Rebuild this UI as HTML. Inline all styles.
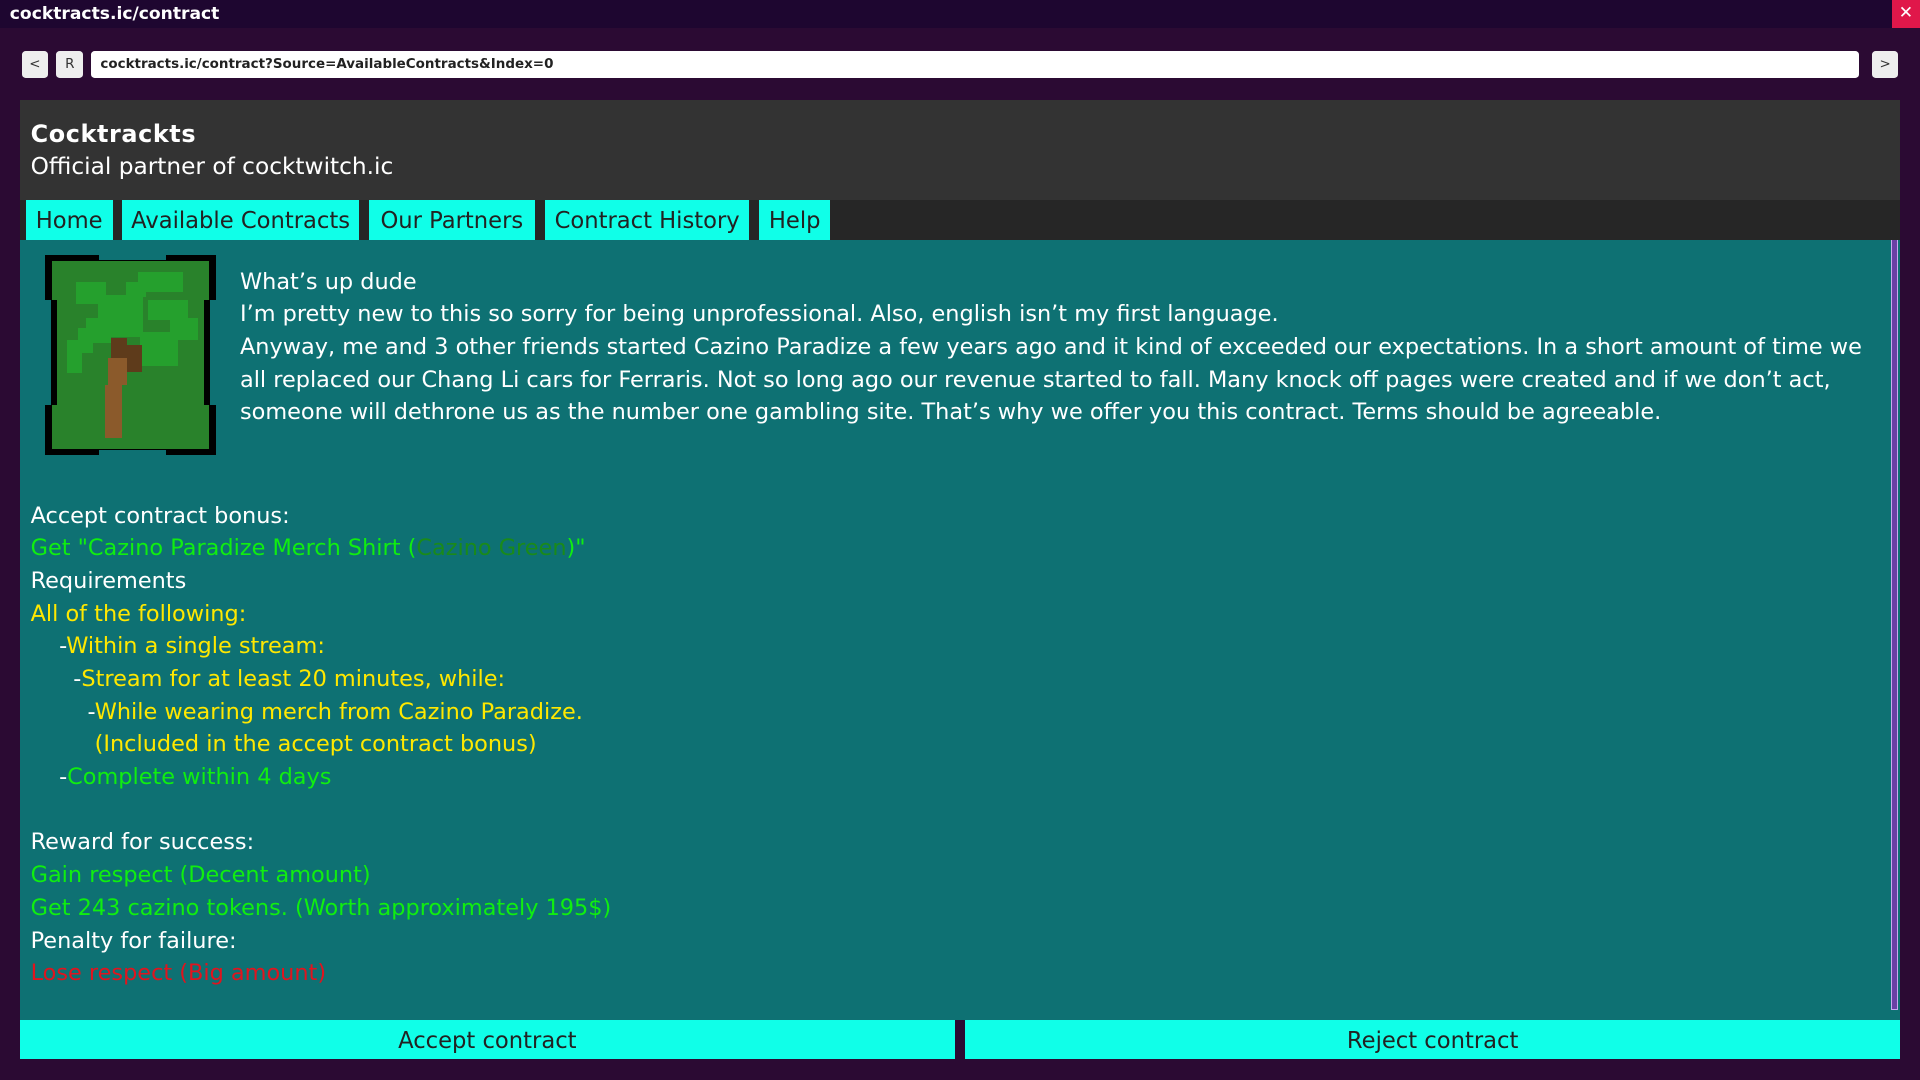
<!DOCTYPE html>
<html><head><meta charset="utf-8"><style>
html,body{margin:0;padding:0;width:1920px;height:1080px;overflow:hidden;background:#1b1335}
#w{zoom:1.22449;position:relative;width:1568px;height:882px;background:#2b0a33;font-family:"DejaVu Sans","Liberation Sans",sans-serif}
.a{position:absolute}
#tb{left:0;top:0;width:1568px;height:23px;background:#1e0630;color:#fff;font:bold 14px "DejaVu Sans",sans-serif;line-height:24px;padding-left:8px;box-sizing:border-box}
#x{left:1545px;top:0;width:23px;height:23px;background:#e0174a;color:#fff;text-align:center;line-height:22px;font-size:14px}
.b{background:#eee;border-radius:3px;font-size:11px;color:#333;text-align:center;line-height:23px;height:22px;top:42px}
#url{left:74px;top:42px;width:1444px;height:22px;background:#fff;border-radius:3px;font:bold 11px "DejaVu Sans",sans-serif;line-height:23px;padding-left:8px;box-sizing:border-box;color:#222}
#hd{left:16px;top:82px;width:1536px;height:81px;background:#333;color:#fff}
#nav{left:16px;top:163px;width:1536px;height:33px;background:#262626}
.t{top:163px;height:33px;background:#10ffe8;color:#222;font-size:18.5px;line-height:35px;text-align:center}
#ct{left:16px;top:196px;width:1536px;height:637px;background:#0e7173;color:#fff;font-size:18.3px;line-height:26.7px}
.y{color:#ffe800}.g{color:#10ee10}.r{color:#e0141e}
.btn{top:833px;height:32px;background:#10ffe8;color:#222;font-size:18.5px;line-height:35px;text-align:center}
</style></head><body><div id="w">
<div id="tb" class="a">cocktracts.ic/contract</div>
<div id="x" class="a">✕</div>
<div class="a b" style="left:18px;width:21px">&lt;</div>
<div class="a b" style="left:46px;width:22px">R</div>
<div id="url" class="a">cocktracts.ic/contract?Source=AvailableContracts&amp;Index=0</div>
<div class="a b" style="left:1529px;width:21px">&gt;</div>
<div id="hd" class="a"><div class="a" style="left:9px;top:16px;font-size:19.5px;font-weight:600;letter-spacing:0.5px">Cocktrackts</div><div class="a" style="left:9px;top:43px;font-size:19px">Official partner of cocktwitch.ic</div></div>
<div id="nav" class="a"></div>
<div class="a t" style="left:21px;width:71px">Home</div>
<div class="a t" style="left:100px;width:193px">Available Contracts</div>
<div class="a t" style="left:301px;width:136px">Our Partners</div>
<div class="a t" style="left:445px;width:167px">Contract History</div>
<div class="a t" style="left:620px;width:58px">Help</div>
<div id="ct" class="a">
<svg class="a" style="left:16.7px;top:8px" width="147" height="171.5" viewBox="0 0 180 210">
<rect x="5" y="5" width="171" height="200" fill="#000"/>
<rect x="12" y="11" width="157" height="188" fill="#29822b"/>
<rect x="59" y="0" width="67" height="10" fill="#0e7173"/><rect x="59" y="200" width="67" height="10" fill="#0e7173"/>
<rect x="0" y="50" width="11" height="105" fill="#0e7173"/><rect x="170" y="50" width="10" height="105" fill="#0e7173"/>
<rect x="11" y="50" width="6" height="105" fill="#000"/><rect x="164" y="50" width="6" height="105" fill="#000"/>
<g fill="#25a02d"><rect x="36" y="32" width="30" height="22"/><rect x="58" y="45" width="45" height="42"/><rect x="98" y="22" width="45" height="20"/><rect x="86" y="32" width="20" height="15"/><rect x="108" y="50" width="40" height="20"/><rect x="130" y="68" width="28" height="22"/><rect x="46" y="68" width="25" height="25"/><rect x="38" y="78" width="15" height="25"/><rect x="27" y="90" width="15" height="33"/><rect x="100" y="82" width="38" height="34"/></g>
<rect x="71" y="88" width="16" height="20" fill="#5e3b1b"/><rect x="85" y="95" width="17" height="27" fill="#5e3b1b"/>
<rect x="68" y="108" width="19" height="27" fill="#8b5a2b"/><rect x="65" y="135" width="17" height="53" fill="#8b5a2b"/>
</svg>
<div class="a" style="left:180px;top:21px;width:1345px">What’s up dude<br>I’m pretty new to this so sorry for being unprofessional. Also, english isn’t my first language.<br>Anyway, me and 3 other friends started Cazino Paradize a few years ago and it kind of exceeded our expectations. In a short amount of time we all replaced our Chang Li cars for Ferraris. Not so long ago our revenue started to fall. Many knock off pages were created and if we don’t act, someone will dethrone us as the number one gambling site. That’s why we offer you this contract. Terms should be agreeable.</div>
<div class="a" style="left:9px;top:212px;white-space:pre">Accept contract bonus:
<span class="g">Get "Cazino Paradize Merch Shirt (<span style="color:#1a8a1a">Cazino Green</span>)"</span>
Requirements
<span class="y">All of the following:</span>
    -<span class="y">Within a single stream:</span>
      -<span class="y">Stream for at least 20 minutes, while:</span>
        -<span class="y">While wearing merch from Cazino Paradize.</span>
<span class="y">         (Included in the accept contract bonus)</span>
    -<span class="g">Complete within 4 days</span>

Reward for success:
<span class="g">Gain respect (Decent amount)</span>
<span class="g">Get 243 cazino tokens. (Worth approximately 195$)</span>
Penalty for failure:
<span class="r">Lose respect (Big amount)</span></div>
<div class="a" style="left:1528px;top:0;width:6px;height:629px;background:#6a40a5;border:1px solid #c9a8f0;border-top:none;box-sizing:border-box"></div>
</div>
<div class="a btn" style="left:16px;width:764px">Accept contract</div>
<div class="a btn" style="left:788px;width:764px">Reject contract</div>
</div></body></html>
